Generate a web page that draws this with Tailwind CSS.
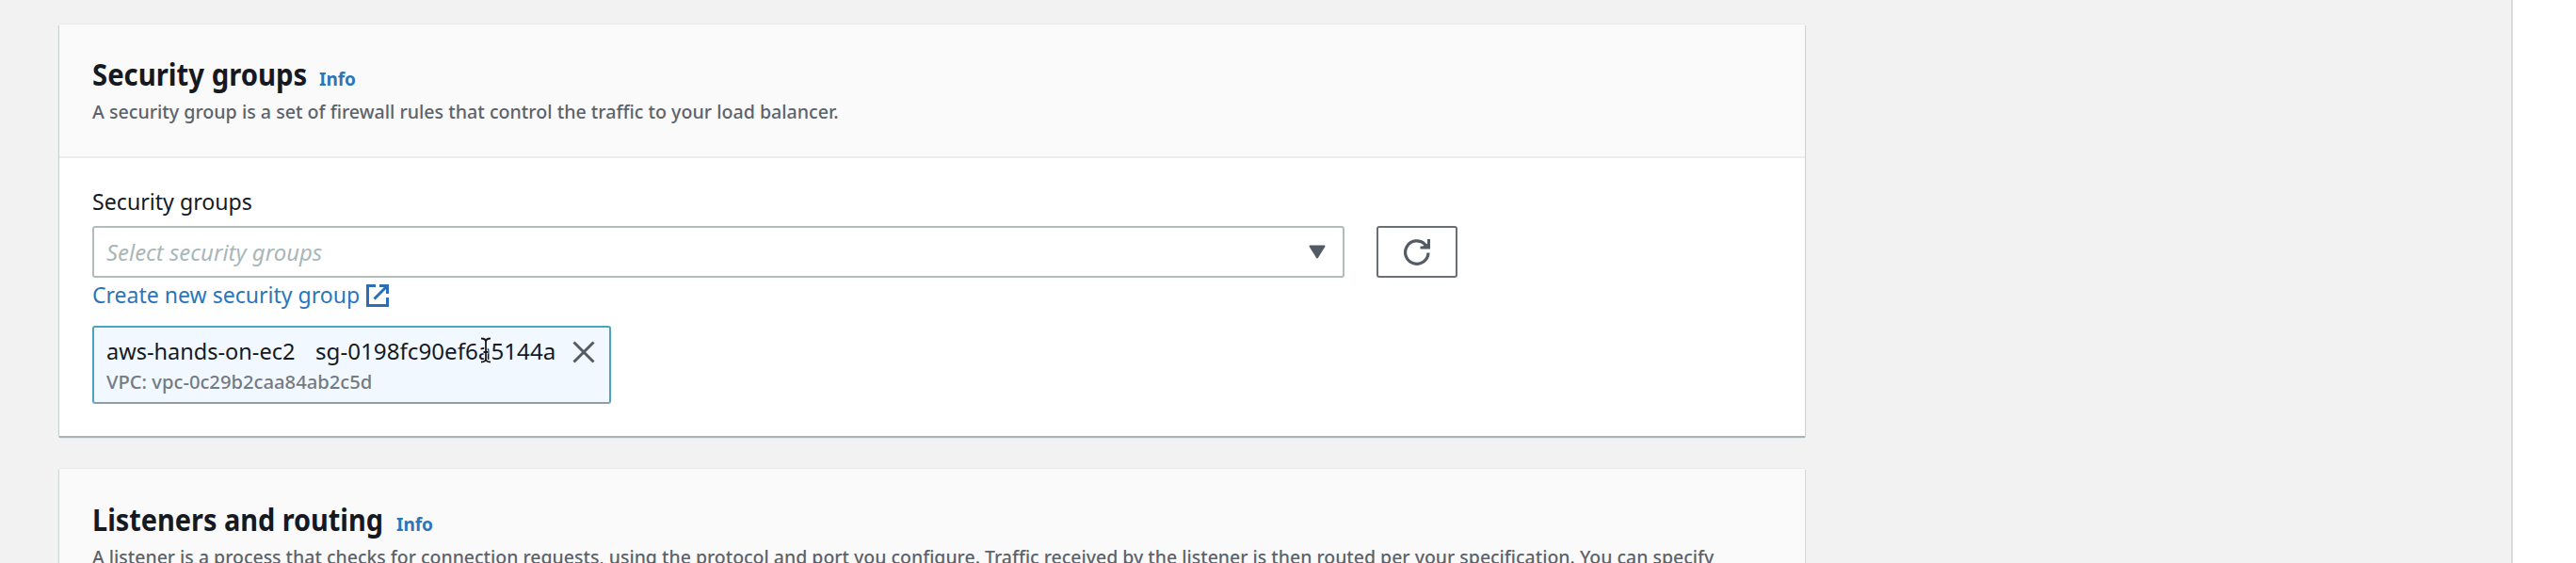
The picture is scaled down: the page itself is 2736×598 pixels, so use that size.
<!DOCTYPE html>
<html lang="en">
<head>
<meta charset="utf-8">
<title>Security groups</title>
<script src="https://cdn.jsdelivr.net/npm/@tailwindcss/browser@4"></script>
</head>
<body class="h-[598px] overflow-hidden bg-white font-['Noto_Sans',sans-serif] text-[#16191f]">
<div class="flex h-[598px] overflow-hidden">
  <main class="flex h-[598px] w-[2669px] shrink-0 flex-col gap-[35px] overflow-hidden border-r-2 border-[#d8dbdb] bg-[#f2f2f2] pt-[26px] pl-[63px]">
    <section class="h-[437px] w-[1854px] shrink-0 bg-white shadow-[0_2px_1px_0_#aab3b5,1px_1px_1px_0_#d5dadb,-1px_1px_1px_0_#d0d5d6,0_-1px_0_0_#eaeded]">
      <header class="h-[142px] border-b-2 border-[#eaeded] bg-[#fafafa] pt-[33px] pl-[35px]">
        <div class="flex h-10 items-baseline whitespace-nowrap">
          <h2 class="w-[241px] shrink-0 origin-left scale-x-[0.915] text-[32px] leading-10 font-bold">Security groups</h2>
          <a class="text-[19px] leading-8 font-bold text-[#2a76bb]">Info</a>
        </div>
        <p class="mt-[5px] w-fit origin-left scale-x-[0.981] whitespace-nowrap text-[20px] leading-[30px] font-medium text-[#5c636b]">A security group is a set of firewall rules that control the traffic to your load balancer.</p>
      </header>
      <div class="flex flex-col items-start pt-7 pl-[35px] whitespace-nowrap">
        <label class="origin-left scale-x-[0.965] text-[24px] leading-9">Security groups</label>
        <div class="mt-2 flex gap-[34px]">
          <div class="flex h-[55px] w-[1330px] items-center justify-between rounded-[3px] border-2 border-[#b3bcbd] pr-[18px] pl-[13px]">
            <span class="origin-left scale-x-[0.995] text-[24px] leading-9 text-[#aab7b8] italic">Select security groups</span>
            <svg class="h-[15px] w-[18px]" viewBox="0 0 18 15"><path d="M1.5 1.500h15L9 13.500z" fill="#545b64" stroke="#545b64" stroke-width="2" stroke-linejoin="round"/></svg>
          </div>
          <button class="flex h-[55px] w-[86px] items-center justify-center rounded-[3px] border-2 border-[#6a6f77]">
            <svg class="h-7 w-7" viewBox="0 0 28 28" fill="none" stroke="#545b64" stroke-width="3.200"><path d="M26 14.500A12.200 12.200 0 1 1 22.500 5.500"/><path d="M28 0V10.500H17.500V7.500H20.500L22 4.500L25 5V0z" fill="#545b64" stroke="none"/></svg>
          </button>
        </div>
        <a class="flex h-9 items-center text-[#2a76bb]">
          <span class="w-[291px] origin-left scale-x-[0.96] text-[24px] leading-9">Create new security group</span>
          <svg class="mt-px h-6 w-6" viewBox="0 0 24 24" fill="none" stroke="#2a6fb5" stroke-width="3"><path d="M10 1.500H1.500V22.500H22.500V14"/><path d="M14 1.500H22.500V10M21.500 2.500L8.500 15.500"/></svg>
        </a>
        <div class="relative mt-[15px] flex h-[83px] w-[551px] justify-between rounded-[3px] border-2 border-[#4aa3bf] border-b-[#8f9ca8] bg-[#f1f8ff] pt-[10px] pr-[15px] pl-[13px]">
          <div>
            <div class="flex text-[24px] leading-[30px]"><span class="w-[222px] origin-left scale-x-[0.98]">aws-hands-on-ec2</span><span class="origin-left scale-x-[1.007]">sg-0198fc90ef6a5144a</span></div>
            <div class="mt-[3px] w-fit origin-left scale-x-[1.01] text-[20px] leading-[30px] font-medium text-[#747b83]">VPC: vpc-0c29b2caa84ab2c5d</div>
          </div>
          <svg class="mt-[4px] h-6 w-6" viewBox="0 0 24 24" fill="none" stroke="#545b64" stroke-width="3"><path d="M1.500 1.500L22.500 22.500M22.500 1.500L1.500 22.500"/></svg>
          <svg class="absolute top-[10px] left-[410px] h-7 w-3" viewBox="0 0 12 28" fill="none"><path d="M1 1.500Q6 1.500 6 5V23Q6 26.500 1 26.500M11 1.500Q6 1.500 6 5M11 26.500Q6 26.500 6 23M3.500 16H8.500" stroke="#fff" stroke-width="3.500"/><path d="M1 1.500Q6 1.500 6 5V23Q6 26.500 1 26.500M11 1.500Q6 1.500 6 5M11 26.500Q6 26.500 6 23M3.500 16H8.500" stroke="#16191f" stroke-width="1.800"/></svg>
        </div>
      </div>
    </section>
    <section class="h-[438px] w-[1854px] shrink-0 bg-white shadow-[1px_1px_1px_0_#d5dadb,-1px_1px_1px_0_#d0d5d6,0_-1px_0_0_#eaeded]">
      <header class="h-[142px] bg-[#fafafa] pt-[34px] pl-[35px]">
        <div class="flex h-10 items-baseline whitespace-nowrap">
          <h2 class="w-[323px] shrink-0 origin-left scale-x-[0.902] text-[32px] leading-10 font-bold">Listeners and routing</h2>
          <a class="text-[19px] leading-8 font-bold text-[#2a76bb]">Info</a>
        </div>
        <p class="mt-[5px] w-fit origin-left scale-x-[0.9735] whitespace-nowrap text-[20px] leading-[30px] font-medium text-[#5c636b]">A listener is a process that checks for connection requests, using the protocol and port you configure. Traffic received by the listener is then routed per your specification. You can specify</p>
      </header>
    </section>
  </main>
</div>
</body>
</html>
